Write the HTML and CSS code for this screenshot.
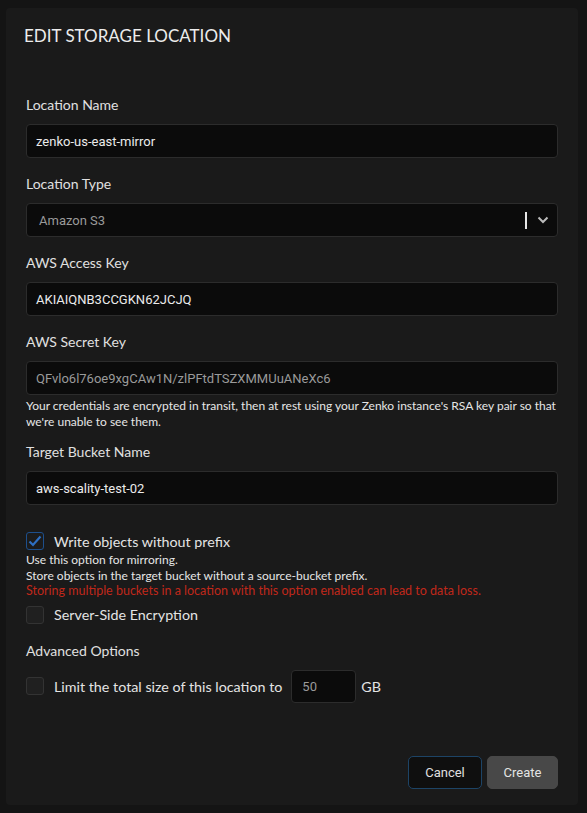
FILE: index.html
```html
<!DOCTYPE html>
<html>
<head>
<meta charset="utf-8">
<link rel="stylesheet" href="styles.css">
</head>
<body>
<div class="panel">
  <h1 class="title">EDIT STORAGE LOCATION</h1>
  <div class="form">
    <div class="field">
      <label class="label">Location Name</label>
      <div class="input">zenko-us-east-mirror</div>
    </div>
    <div class="field">
      <label class="label">Location Type</label>
      <div class="input select">
        <span class="muted sel-text">Amazon S3</span>
        <span class="sel-sep"></span>
        <svg class="chev" width="12" height="8" viewBox="0 0 12 8"><path d="M1.5 1.5 L6 6 L10.5 1.5" fill="none" stroke="#bbb" stroke-width="2"/></svg>
      </div>
    </div>
    <div class="field">
      <label class="label">AWS Access Key</label>
      <div class="input">AKIAIQNB3CCGKN62JCJQ</div>
    </div>
    <div class="field">
      <label class="label">AWS Secret Key</label>
      <div class="input muted">QFvlo6l76oe9xgCAw1N/zlPFtdTSZXMMUuANeXc6</div>
      <p class="help help-cred">Your credentials are encrypted in transit, then at rest using your Zenko instance's RSA key pair so that we're unable to see them.</p>
    </div>
    <div class="field">
      <label class="label">Target Bucket Name</label>
      <div class="input">aws-scality-test-02</div>
    </div>
    <div class="check-row first-check">
      <span class="box checked">
        <svg width="14" height="12" viewBox="0 0 14 12"><path d="M1.5 6.5 L5 10 L12.5 1.5" fill="none" stroke="#2e6fc2" stroke-width="2.2"/></svg>
      </span>
      <span class="check-label">Write objects without prefix</span>
    </div>
    <div class="help-block">
      <p class="help">Use this option for mirroring.</p>
      <p class="help">Store objects in the target bucket without a source-bucket prefix.</p>
      <p class="help warn">Storing multiple buckets in a location with this option enabled can lead to data loss.</p>
    </div>
    <div class="check-row">
      <span class="box"></span>
      <span class="check-label">Server-Side Encryption</span>
    </div>
    <div class="advanced">
      <label class="label">Advanced Options</label>
      <div class="limit-row">
        <span class="box"></span>
        <span class="check-label">Limit the total size of this location to</span>
        <div class="input small muted">50</div>
        <span class="check-label gb">GB</span>
      </div>
    </div>
  </div>
  <div class="actions">
    <button class="btn cancel">Cancel</button>
    <button class="btn create">Create</button>
  </div>
</div>
</body>
</html>
```

FILE: styles.css
```css
html, body {
  margin: 0;
  padding: 0;
  background: #141414;
}
body {
  padding: 8px 9px 8px 6px;
  font-family: Lato, "Noto Sans", sans-serif;
  color: #e2e2e2;
}
.panel {
  background: #1a1a1a;
  border-radius: 4px;
  padding: 18px 20px 16px 20px;
  height: 797px;
  box-sizing: border-box;
  display: flex;
  flex-direction: column;
}
.title {
  margin: 0 0 0 -2px;
  font-size: 17px;
  font-weight: 400;
  line-height: 20px;
  color: #ececec;
}
.form {
  margin-top: 49px;
  display: flex;
  flex-direction: column;
}
.field {
  display: flex;
  flex-direction: column;
  margin-bottom: 16px;
}
.label {
  display: block;
  font-size: 14px;
  line-height: 20px;
  color: #e0e0e0;
  margin-bottom: 9px;
}
.input {
  height: 34px;
  box-sizing: border-box;
  background: #0b0b0b;
  border: 1px solid #2c2c2c;
  border-radius: 4px;
  padding: 0 9px;
  display: flex;
  align-items: center;
  font-family: Roboto, "Liberation Sans", Arial, sans-serif;
  font-size: 13px;
  color: #ececec;
}
.muted { color: #9a9a9a; }
.select { padding-left: 12px; padding-right: 8px; }
.sel-text { flex: 1; }
.sel-sep {
  width: 2px;
  height: 17px;
  background: #e6e6e6;
  margin-right: 10px;
}
.chev { margin-right: 0; }
.help {
  margin: 0;
  font-size: 12px;
  line-height: 15.5px;
  color: #e6e6e6;
}
.help.warn {
  color: #c0281a;
  font-size: 12.5px;
}
.help-cred {
  margin-top: 3px;
  line-height: 16px;
  margin-bottom: -4px;
}
.check-row {
  display: flex;
  align-items: center;
  height: 20px;
}
.first-check { margin-top: 10px; }
.box {
  width: 18px;
  height: 18px;
  box-sizing: border-box;
  border: 1px solid #333;
  border-radius: 3px;
  background: #202020;
  margin-right: 10px;
  display: flex;
  align-items: center;
  justify-content: center;
}
.box.checked {
  border-color: #1d4f8c;
  background: #1b1b1b;
}
.check-label {
  font-size: 14.3px;
  color: #e4e4e4;
}
.help-block {
  margin: 1px 0 6px 0;
}
.advanced {
  margin-top: 16px;
}
.advanced .label { margin-bottom: 9px; }
.limit-row {
  display: flex;
  align-items: center;
}
.input.small {
  width: 65px;
  height: 33px;
  margin: 0 5px 0 9px;
  padding-left: 10px;
}
.gb { margin-left: 0; }
.actions {
  margin-top: auto;
  display: flex;
  justify-content: flex-end;
  gap: 5px;
}
.btn {
  height: 33px;
  border-radius: 5px;
  font-family: Roboto, "Liberation Sans", Arial, sans-serif;
  font-size: 13px;
  padding: 0;
  cursor: pointer;
}
.cancel {
  width: 74px;
  background: #0f0f0f;
  border: 1px solid #1d4466;
  color: #e0e0e0;
}
.create {
  width: 71px;
  background: #484848;
  border: 1px solid #484848;
  color: #e4e4e4;
}
```
